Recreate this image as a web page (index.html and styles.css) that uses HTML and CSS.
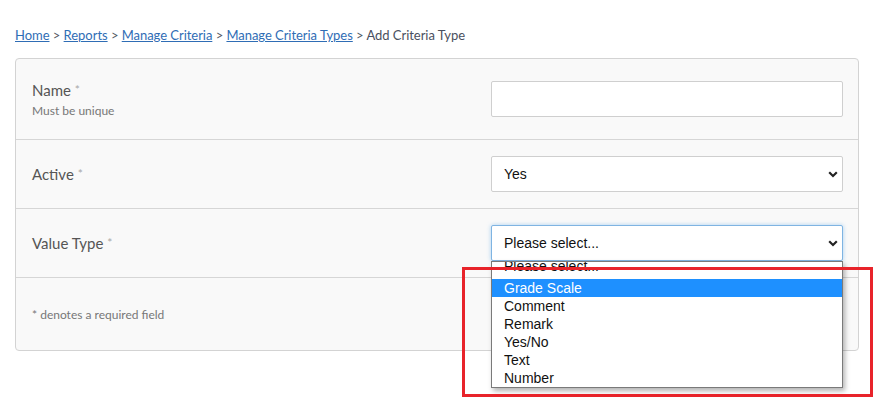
FILE: index.html
```html
<!DOCTYPE html>
<html lang="en">
<head>
<meta charset="utf-8">
<title>Add Criteria Type</title>
<link rel="stylesheet" href="styles.css">
</head>
<body>
<div class="page">
  <nav class="crumbs">
    <a href="#">Home</a> <span class="sep">&gt;</span>
    <a href="#">Reports</a> <span class="sep">&gt;</span>
    <a href="#">Manage Criteria</a> <span class="sep">&gt;</span>
    <a href="#">Manage Criteria Types</a> <span class="sep">&gt;</span>
    <span class="current">Add Criteria Type</span>
  </nav>

  <form class="panel">
    <div class="row row-first">
      <div class="label">
        <div class="title">Name <span class="req">*</span></div>
        <div class="hint">Must be unique</div>
      </div>
      <div class="control">
        <input class="field" type="text">
      </div>
    </div>

    <div class="row">
      <div class="label">
        <div class="title">Active <span class="req">*</span></div>
      </div>
      <div class="control">
        <div class="select-wrap">
          <select class="field select">
            <option>Yes</option>
            <option>No</option>
          </select>
          <svg class="chev" width="10" height="7" viewBox="0 0 10 7"><path d="M1.2 1.3 L5 5 L8.8 1.3" fill="none" stroke="#222" stroke-width="2.2"/></svg>
        </div>
      </div>
    </div>

    <div class="row">
      <div class="label">
        <div class="title">Value Type <span class="req">*</span></div>
      </div>
      <div class="control">
        <div class="select-wrap">
          <select class="field select focused">
            <option>Please select...</option>
          </select>
          <svg class="chev" width="10" height="7" viewBox="0 0 10 7"><path d="M1.2 1.3 L5 5 L8.8 1.3" fill="none" stroke="#222" stroke-width="2.2"/></svg>
          <ul class="dropdown">
            <li class="opt opt-cut"><span>Please select...</span></li>
            <li class="opt active">Grade Scale</li>
            <li class="opt">Comment</li>
            <li class="opt">Remark</li>
            <li class="opt">Yes/No</li>
            <li class="opt">Text</li>
            <li class="opt">Number</li>
          </ul>
        </div>
      </div>
    </div>

    <div class="footer">* denotes a required field</div>
  </form>

  <div class="highlight"></div>
</div>
</body>
</html>
```

FILE: styles.css
```css
* { box-sizing: border-box; }

html, body {
  margin: 0;
  padding: 0;
  background: #ffffff;
}

body {
  font-family: Lato, "Open Sans", "Liberation Sans", sans-serif;
  color: #555555;
}

.page {
  position: relative;
  width: 879px;
  height: 398px;
  padding: 27px 20px 0 15px;
  overflow: hidden;
}

.crumbs {
  font-size: 13px;
  line-height: 16px;
  color: #4a5060;
  margin-bottom: 15px;
  white-space: nowrap;
  letter-spacing: -0.04px;
}

.crumbs a {
  color: #2f6db5;
  text-decoration: underline;
}

.crumbs .sep { color: #555a66; }

.panel {
  width: 844px;
  margin: 0;
  background: #f9f9f9;
  border: 1px solid #d3d3d3;
  border-radius: 4px;
}

.row {
  display: grid;
  grid-template-columns: 1fr 352px;
  align-items: center;
  height: 69px;
  padding: 0 15px 0 16px;
  border-bottom: 1px solid #d6d6d6;
}

.row-first { height: 81px; }

.title {
  font-size: 15px;
  line-height: 18px;
  color: #555555;
}

.req {
  color: #a8a8a8;
  font-size: 12px;
  vertical-align: 2px;
}

.hint {
  font-size: 12px;
  line-height: 15px;
  color: #777777;
  margin-top: 4px;
}

.control { position: relative; }

.field {
  display: block;
  width: 352px;
  height: 36px;
  margin: 0;
  background: #ffffff;
  border: 1px solid #cfcfcf;
  border-radius: 2px;
  font-family: "Liberation Sans", Arial, sans-serif;
  font-size: 14px;
  color: #111111;
  padding: 0 12px;
  outline: none;
}

.select {
  -webkit-appearance: none;
  appearance: none;
}

.select-wrap { position: relative; }

.chev {
  position: absolute;
  right: 5px;
  top: 15px;
  pointer-events: none;
}

.focused {
  border-color: #7fb4e2;
  box-shadow: 0 0 4px rgba(102, 175, 233, 0.55);
}

.dropdown {
  position: absolute;
  left: 0;
  top: 36px;
  width: 352px;
  height: 127px;
  margin: 0;
  padding: 0;
  list-style: none;
  background: #ffffff;
  border: 1px solid #7a7a7a;
  box-shadow: 2px 3px 5px rgba(0, 0, 0, 0.3);
  font-family: "Liberation Sans", Arial, sans-serif;
  font-size: 14px;
  color: #111111;
  overflow: hidden;
  z-index: 2;
}

.opt {
  height: 18px;
  line-height: 18px;
  padding: 0 12px;
  white-space: nowrap;
}

.opt-cut {
  height: 17px;
  overflow: hidden;
}

.opt-cut span {
  display: block;
  margin-top: -5px;
}

.opt.active {
  background: #1e90ff;
  color: #ffffff;
}

.footer {
  height: 72px;
  display: flex;
  align-items: center;
  padding: 0 16px;
  font-size: 12px;
  color: #777777;
}

.highlight {
  position: absolute;
  left: 462px;
  top: 267px;
  width: 411px;
  height: 130px;
  border: 3px solid #e8232a;
  z-index: 3;
  pointer-events: none;
}
```
